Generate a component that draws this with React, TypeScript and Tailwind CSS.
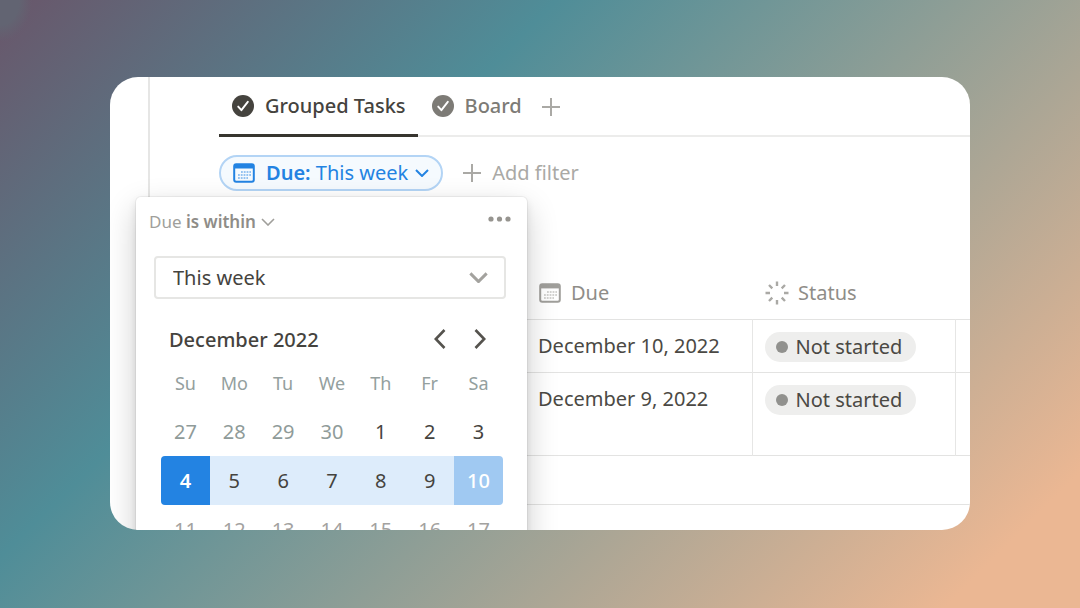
import { ReactNode } from "react";
import clsx from "clsx";

const weekdays = ["Su", "Mo", "Tu", "We", "Th", "Fr", "Sa"];

const weeks = [
  [27, 28, 29, 30, 1, 2, 3],
  [4, 5, 6, 7, 8, 9, 10],
  [11, 12, 13, 14, 15, 16, 17],
];

const tasks = [
  { due: "December 10, 2022", status: "Not started", height: "h-[53px]" },
  { due: "December 9, 2022", status: "Not started", height: "h-[83px]" },
];

function CheckCircle() {
  return (
    <svg viewBox="0 0 22 22" className="size-[22px]" aria-hidden="true">
      <circle cx="11" cy="11" r="11" fill="currentColor" />
      <path d="M6.2 11.6 9.4 15.2 15.8 6.8" fill="none" stroke="#fff" strokeWidth="1.9" strokeLinecap="round" strokeLinejoin="round" />
    </svg>
  );
}

function Plus() {
  return (
    <svg viewBox="0 0 18 18" className="size-[18px]" aria-hidden="true">
      <path d="M9 0V18M0 9H18" stroke="currentColor" strokeWidth="2" />
    </svg>
  );
}

function Calendar() {
  return (
    <svg viewBox="0 0 22 20" className="h-5 w-[22px]" aria-hidden="true">
      <rect x="1.2" y="1.2" width="19.6" height="17.6" rx="2" fill="none" stroke="currentColor" strokeWidth="2" />
      <path d="M1 1.5H21V5.4H1Z" fill="currentColor" />
      <path d="M8 9H18M5 12H18M5 15H15" stroke="currentColor" strokeWidth="1.6" strokeDasharray="1.8 1" opacity="0.6" />
    </svg>
  );
}

function Spinner() {
  return (
    <svg viewBox="0 0 24 24" className="size-6" aria-hidden="true">
      <path
        d="M12 0.5V5M12 19V23.5M0.5 12H5M19 12H23.5M4 4 7.3 7.3M16.7 16.7 20 20M4 20 7.3 16.7M16.7 7.3 20 4"
        stroke="currentColor"
        strokeWidth="2.4"
      />
    </svg>
  );
}

function Chevron({ className, strokeWidth = 2 }: { className: string; strokeWidth?: number }) {
  return (
    <svg viewBox="0 0 14 8" className={className} aria-hidden="true">
      <path d="M1 1 7 7 13 1" fill="none" stroke="currentColor" strokeWidth={strokeWidth} />
    </svg>
  );
}

function Arrow({ d }: { d: string }) {
  return (
    <svg viewBox="0 0 12 20" className="h-5 w-3" aria-hidden="true">
      <path d={d} fill="none" stroke="currentColor" strokeWidth="2.6" />
    </svg>
  );
}

function Tab({ active, children }: { active?: boolean; children: ReactNode }) {
  return (
    <button
      type="button"
      className={clsx(
        "flex h-[60px] items-center gap-[11px] border-b-[3px] pr-3 text-xl font-medium",
        active ? "border-[#37352f] pl-[13px] text-[#45433e]" : "border-transparent pl-[14px] text-[#7d7b76]"
      )}
    >
      <CheckCircle />
      {children}
    </button>
  );
}

function DatePicker() {
  return (
    <div className="pt-[22px] pr-6 pl-[25px]">
      <div className="flex h-[38px] items-center pl-2">
        <h2 className="grow text-xl font-medium text-[#45433e]">December 2022</h2>
        <div className="flex gap-7 pr-[17px] pb-[3px] text-[#55534e]">
          <button type="button" aria-label="Previous month">
            <Arrow d="M10.5 1 1.8 10 10.5 19" />
          </button>
          <button type="button" aria-label="Next month">
            <Arrow d="M1.5 1 10.2 10 1.5 19" />
          </button>
        </div>
      </div>
      <table className="w-full table-fixed border-collapse">
        <thead>
          <tr className="h-12 text-lg text-[#94a09e]">
            {weekdays.map((day) => (
              <th key={day} className="p-0 font-normal">{day}</th>
            ))}
          </tr>
        </thead>
        <tbody>
          {weeks.map((week, row) => (
            <tr key={week[0]}>
              {week.map((day) => (
                <td key={day} className="p-0">
                  <button
                    type="button"
                    className={clsx(
                      "h-[49px] w-full text-xl",
                      row === 0 && (day > 20 ? "text-[#8f9b99]" : "text-[#45433e]"),
                      row === 1 && day === 4 && "rounded-l bg-[#2383e2] font-semibold text-white",
                      row === 1 && day > 4 && day < 10 && "bg-[#ddecfb] text-[#45433e]",
                      row === 1 && day === 10 && "rounded-r bg-[#a0c9f2] font-medium text-white",
                      row === 2 && "text-[#a3a29f]"
                    )}
                  >
                    {day}
                  </button>
                </td>
              ))}
            </tr>
          ))}
        </tbody>
      </table>
    </div>
  );
}

function FilterPopover() {
  return (
    <div className="absolute top-full -left-[83px] z-10 mt-[6px] w-[391px] rounded-[5px] bg-white shadow-[0_0_0_1px_rgba(15,15,15,0.05),0_4px_8px_rgba(15,15,15,0.1),0_12px_32px_rgba(15,15,15,0.2)]">
      <div className="flex h-[59px] items-start justify-between pt-3 pr-4 pl-[13px]">
        <button type="button" className="flex items-center gap-[5px] text-[17px] leading-[26px] text-[#a09f9b]">
          <span>
            Due <span className="font-semibold text-[#8f8d88]">is within</span>
          </span>
          <Chevron className="h-2 w-[14px]" strokeWidth={1.6} />
        </button>
        <button type="button" aria-label="Filter options" className="flex h-5 items-center text-[#96948f]">
          <svg viewBox="0 0 23 6" className="h-[6px] w-[23px]" aria-hidden="true">
            <circle cx="3" cy="3" r="2.6" fill="currentColor" />
            <circle cx="11.5" cy="3" r="2.6" fill="currentColor" />
            <circle cx="20" cy="3" r="2.6" fill="currentColor" />
          </svg>
        </button>
      </div>
      <div className="relative mr-[21px] ml-[18px]">
        <select
          aria-label="Date range"
          className="h-[43px] w-full appearance-none rounded border-2 border-[#e6e6e4] bg-white pl-[17px] text-xl text-[#45433e]"
        >
          <option>This week</option>
        </select>
        <span className="pointer-events-none absolute inset-y-0 right-[18px] flex items-center text-[#a3a29e]">
          <Chevron className="h-[11px] w-[19px]" strokeWidth={2.2} />
        </span>
      </div>
      <DatePicker />
    </div>
  );
}

function TaskTable() {
  return (
    <table className="mt-[76px] w-full table-fixed border-collapse text-xl text-[#4b4944]">
      <colgroup>
        <col />
        <col className="w-[226px]" />
        <col className="w-[203px]" />
        <col className="w-[15px]" />
      </colgroup>
      <thead>
        <tr className="h-[52px] border-b border-[#e3e3e2] text-left text-[#8f8d88]">
          <th />
          <th className="py-0 pr-0 pl-[13px] font-normal">
            <span className="flex items-center gap-[10px]">
              <span className="text-[#a09f9b]"><Calendar /></span>
              Due
            </span>
          </th>
          <th className="py-0 pr-0 pl-[13px] font-normal">
            <span className="flex items-center gap-[9px]">
              <span className="text-[#aaa9a5]"><Spinner /></span>
              Status
            </span>
          </th>
          <th />
        </tr>
      </thead>
      <tbody>
        {tasks.map((task) => (
          <tr key={task.due} className={clsx(task.height, "border-b border-[#e3e3e2] align-top")}>
            <td />
            <td className="py-3 pr-0 pl-3 leading-7">{task.due}</td>
            <td className="border-x border-[#e6e6e5] pt-3 pr-0 pb-0 pl-3">
              <div className="flex h-[30px] w-fit items-center gap-2 rounded-full bg-[#eeeeed] pr-[14px] pl-[11px]">
                <span className="size-3 rounded-full bg-[#91918e]" />
                {task.status}
              </div>
            </td>
            <td />
          </tr>
        ))}
        <tr className="h-[49px] border-b border-[#e3e3e2]">
          <td colSpan={4} />
        </tr>
      </tbody>
    </table>
  );
}

export default function App() {
  return (
    <div className="flex h-screen bg-[radial-gradient(32px_42px_at_0_0,#626472_60%,transparent),linear-gradient(135deg,#69566a_0%,#4f8d98_33%,#ebb793_92%)] px-[110px] pt-[77px] pb-[78px] font-['Noto_Sans',sans-serif]">
      <div className="flex grow overflow-hidden rounded-[28px] bg-white">
        <aside className="w-10 shrink-0 border-r-2 border-[#e6e6e5]" />
        <main className="min-w-0 grow pl-[69px]">
          <nav className="flex shadow-[inset_0_-2px_0_#ececeb]">
            <Tab active>Grouped Tasks</Tab>
            <Tab>Board</Tab>
            <button type="button" aria-label="Add view" className="ml-2 text-[#aaa9a5]">
              <Plus />
            </button>
          </nav>
          <div className="flex items-center gap-5 pt-[18px]">
            <div className="relative">
              <button
                type="button"
                className="flex h-9 items-center gap-[7px] rounded-full border-2 border-[#b3d4f5] bg-[#f5fafe] px-3 text-xl text-[#2383e2]"
              >
                <span className="flex items-center gap-[11px]">
                  <Calendar />
                  <span>
                    <span className="font-semibold">Due:</span> This week
                  </span>
                </span>
                <Chevron className="h-2 w-[14px]" strokeWidth={2} />
              </button>
              <FilterPopover />
            </div>
            <button type="button" className="flex items-center gap-[11px] text-xl text-[#aaa9a5]">
              <Plus />
              Add filter
            </button>
          </div>
          <TaskTable />
        </main>
      </div>
    </div>
  );
}
